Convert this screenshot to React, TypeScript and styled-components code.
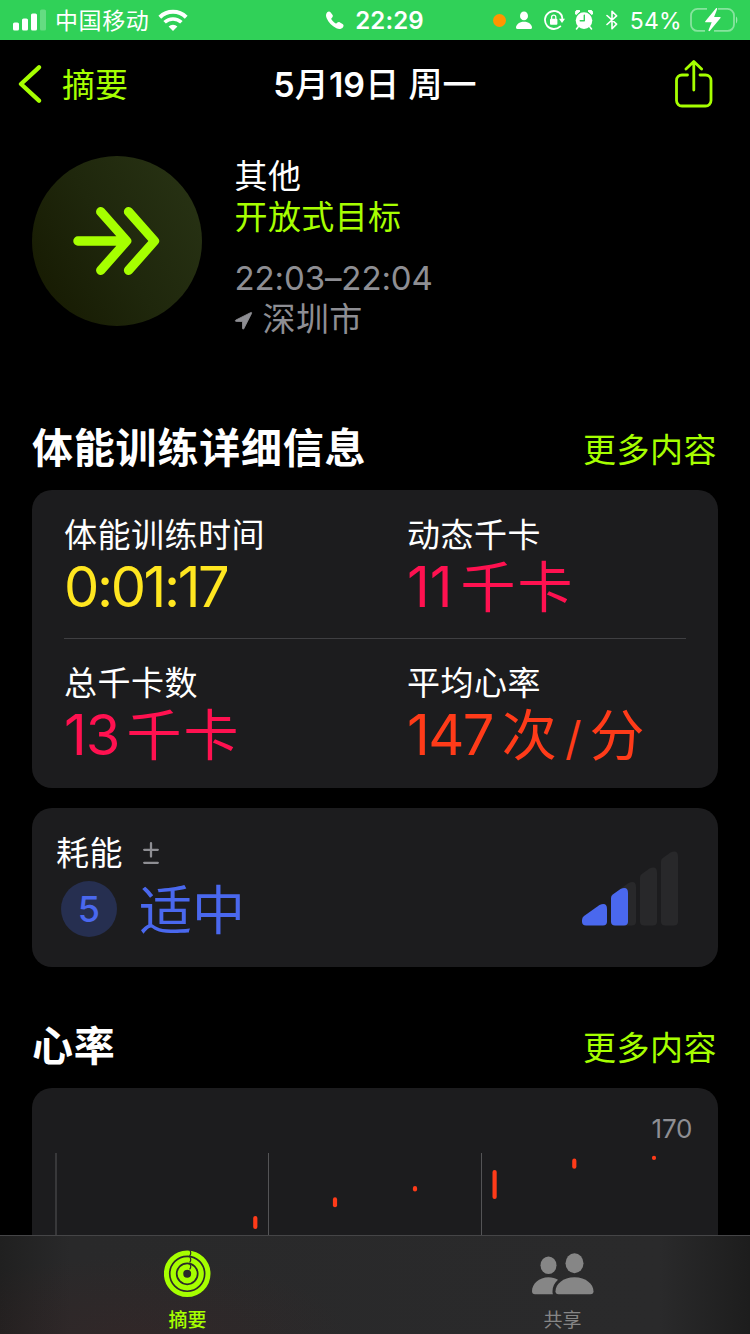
import React from "react";
import styled, { createGlobalStyle } from "styled-components";

const LIME = "#a6ff00";
const GRAY = "#8e8e93";
const RED = "#ff3b19";
const PINK = "#ff1150";
const YELLOW = "#ffe620";
const BLUE = "#4a68ee";

const Global = createGlobalStyle`
  * { box-sizing: border-box; }
  body { margin: 0; background: #000; }
  svg { display: block; flex: none; }
`;

const Screen = styled.div`
  width: 750px;
  height: 1334px;
  display: flex;
  flex-direction: column;
  overflow: hidden;
  background: #000;
  color: #fff;
  font-family: Inter, "Noto Sans CJK SC", sans-serif;
  white-space: nowrap;
`;

const StatusBar = styled.div`
  flex: none;
  height: 40px;
  padding: 0 12px;
  display: grid;
  grid-template-columns: 1fr auto 1fr;
  align-items: center;
  background: #30d158;
`;

const StatusGroup = styled.div<{ $end?: boolean }>`
  display: flex;
  align-items: center;
  justify-content: ${(p) => (p.$end ? "flex-end" : "flex-start")};
`;

const StatusText = styled.span<{ $size: number; $weight?: number; $ls?: number }>`
  padding-top: 2px;
  font-size: ${(p) => p.$size}px;
  font-weight: ${(p) => p.$weight ?? 400};
  letter-spacing: ${(p) => p.$ls ?? 0}px;
  line-height: 38px;
`;

const NavBar = styled.div`
  flex: none;
  height: 88px;
  padding: 0 18px;
  display: grid;
  grid-template-columns: 1fr auto 1fr;
  align-items: center;
`;

const BackButton = styled.div`
  display: flex;
  align-items: center;
  gap: 19px;
  color: ${LIME};
  font-size: 33px;
  line-height: 40px;
`;

const BackText = styled.span`
  padding-top: 2px;
`;

const NavTitle = styled.div`
  padding-top: 2px;
  font-size: 34px;
  font-weight: 500;
  line-height: 40px;
  letter-spacing: 0.1px;
`;

const Numeral = styled.span`
  font-weight: 600;
`;

const ShareButton = styled.div`
  justify-self: end;
  margin-right: 18px;
`;

const Content = styled.div`
  flex: 1;
  min-height: 0;
  overflow: hidden;
  padding: 28px 32px 0;
`;

const Workout = styled.div`
  height: 184px;
  display: flex;
  align-items: flex-start;
  gap: 32.5px;
`;

const WorkoutBadge = styled.div`
  flex: none;
  width: 170px;
  height: 170px;
  border-radius: 50%;
  display: flex;
  align-items: center;
  justify-content: center;
  background: linear-gradient(60deg, #151800 0%, #1f270c 48%, #293415 100%);
`;

const WorkoutInfo = styled.div`
  display: flex;
  flex-direction: column;
`;

const InfoLine = styled.div<{ $color?: string; $gap?: number; $ls?: number }>`
  display: flex;
  align-items: center;
  margin-top: ${(p) => p.$gap ?? 0}px;
  font-size: 33px;
  line-height: 41px;
  letter-spacing: ${(p) => p.$ls ?? 0.4}px;
  color: ${(p) => p.$color ?? "#fff"};
`;

const SectionHead = styled.div<{ $top: number }>`
  height: 50px;
  margin-top: ${(p) => p.$top}px;
  margin-bottom: 18px;
  display: flex;
  justify-content: space-between;
`;

const SectionTitle = styled.h2`
  margin: 0;
  padding-top: 1px;
  font-size: 41px;
  font-weight: 700;
  line-height: 50px;
  letter-spacing: 0.8px;
`;

const MoreLink = styled.a`
  padding: 3px 1px 0 0;
  font-size: 33px;
  line-height: 50px;
  letter-spacing: 0.5px;
  color: ${LIME};
`;

const Card = styled.div<{ $height: number }>`
  height: ${(p) => p.$height}px;
  border-radius: 20px;
  background: #1c1c1e;
`;

const MetricsCard = styled(Card)`
  padding: 0 32px;
  margin-bottom: 20px;
`;

const MetricRow = styled.div`
  height: 148px;
  padding-top: 25px;
  display: grid;
  grid-template-columns: 343px 1fr;

  & + & {
    padding-top: 24px;
    border-top: 1px solid #3f3f42;
  }
`;

const Label = styled.div`
  font-size: 33px;
  line-height: 40px;
  letter-spacing: 0.5px;
`;

const Value = styled.div<{ $color: string; $ls?: number }>`
  display: flex;
  align-items: center;
  height: 64px;
  font-size: 56px;
  line-height: 64px;
  letter-spacing: ${(p) => p.$ls ?? 0}px;
  color: ${(p) => p.$color};
`;

const Unit = styled.span<{ $gap?: number; $ls?: number }>`
  margin-left: ${(p) => p.$gap ?? 0}px;
  font-size: 55px;
  letter-spacing: ${(p) => p.$ls ?? 2}px;
`;

const Slash = styled.span`
  margin: 0 6px 0 6px;
  font-size: 46px;
  line-height: 1;
`;

const EffortCard = styled(Card)`
  padding: 25px 39px 0 24px;
  display: flex;
  justify-content: space-between;
`;

const EffortLabel = styled.div`
  display: flex;
  align-items: center;
  gap: 20px;
`;

const EffortValue = styled.div`
  display: flex;
  align-items: center;
  gap: 22px;
  padding-left: 5px;
  margin-top: 8px;
  height: 56px;
  color: ${BLUE};
`;

const EffortLevel = styled.div`
  width: 56px;
  height: 56px;
  border-radius: 50%;
  text-align: center;
  font-size: 36px;
  font-weight: 500;
  line-height: 57px;
  background: #262f50;
`;

const EffortText = styled.div`
  padding-top: 4px;
  font-size: 53px;
  line-height: 56px;
`;

const EffortBars = styled.div`
  padding-top: 18px;
`;

const ChartCard = styled(Card)`
  display: flex;
  flex-direction: column;
`;

const AxisMax = styled.div`
  height: 64px;
  padding: 25px 26px 0 0;
  text-align: right;
  font-size: 26px;
  line-height: 32px;
  letter-spacing: -0.3px;
  color: ${GRAY};
`;

const TabBar = styled.div`
  flex: none;
  height: 99px;
  display: grid;
  grid-template-columns: 1fr 1fr;
  border-top: 1px solid #454547;
  background:
    radial-gradient(ellipse 220px 80px at 130px 100px, rgba(70, 35, 35, 0.28), transparent),
    linear-gradient(90deg, #202020 0, #29292a 70px, #2a2a2b 660px, #1d1d1d 750px);
`;

const Tab = styled.div<{ $color: string; $weight?: number }>`
  display: flex;
  flex-direction: column;
  align-items: center;
  padding-top: 14px;
  gap: 9px;
  color: ${(p) => p.$color};
  font-size: 19px;
  font-weight: ${(p) => p.$weight ?? 400};
  line-height: 27px;
`;

const TabIcon = styled.div`
  height: 48px;
`;

const Spacer = styled.span<{ $w: number }>`
  flex: none;
  width: ${(p) => p.$w}px;
`;

const SignalIcon = () => (
  <svg width="33" height="22" viewBox="0 0 33 22" fill="#fff">
    <rect x="0" y="13.5" width="6" height="8" rx="1.6" />
    <rect x="9" y="9.5" width="6" height="12" rx="1.6" />
    <rect x="18" y="4.5" width="6" height="17" rx="1.6" />
    <rect x="27" y="0.5" width="6" height="21" rx="1.6" opacity="0.25" />
  </svg>
);

const WifiIcon = () => (
  <svg width="30" height="22" viewBox="0 0 30 22" fill="none" stroke="#fff" strokeWidth="4">
    <path d="M1.8 8.2a19 19 0 0 1 26.4 0" />
    <path d="M6.6 13.3a12.2 12.2 0 0 1 16.8 0" strokeWidth="3.6" />
    <path d="M10.6 17.6a6.4 6.4 0 0 1 8.8 0L15 22z" fill="#fff" stroke="none" />
  </svg>
);

const PhoneIcon = () => (
  <svg width="18" height="18" viewBox="0 0 18 18" fill="#fff">
    <path d="M1.2 1.2C2.4.1 3.8.2 4.7 1.4l1.7 2.4c.7 1 .5 1.8-.2 2.6l-.7.8c-.3.4-.3.8 0 1.2.9 1.4 2.4 2.9 3.9 3.9.4.3.8.3 1.2 0l.8-.7c.8-.7 1.6-.8 2.6-.2l2.6 1.6c1.2.8 1.3 2.2.2 3.4-1.6 1.7-3.8 1.9-6.4.8C5.9 15.2 2.4 11.6.7 7.3-.3 4.9-.3 2.8 1.2 1.2z" />
  </svg>
);

const PersonIcon = () => (
  <svg width="16" height="18" viewBox="0 0 16 18" fill="#fff">
    <ellipse cx="8" cy="4.9" rx="4" ry="4.3" />
    <path d="M0 16.8C0 13.5 3.4 10.8 8 10.8s8 2.7 8 6c0 .7-.4 1.2-1.2 1.2H1.2C.4 18 0 17.5 0 16.8z" />
  </svg>
);

const RotationLockIcon = () => (
  <svg width="21" height="20" viewBox="0 0 21 20" fill="none" stroke="#fff">
    <path d="M17.6 5.2A9 9 0 1 0 16.3 16.4" strokeWidth="1.8" strokeLinecap="round" />
    <path d="M15 8.7h6l-3 4.3z" fill="#fff" stroke="none" />
    <path d="M17.4 5.1q.9 1.7 .9 4" strokeWidth="1.8" />
    <rect x="6" y="8.8" width="7.4" height="6" rx="1" fill="#fff" stroke="none" />
    <path d="M7.6 9V7.2a2.1 2.1 0 0 1 4.2 0V9" strokeWidth="1.3" />
  </svg>
);

const AlarmIcon = () => (
  <svg width="18" height="20" viewBox="0 0 18 20">
    <circle cx="9" cy="10.6" r="8.3" fill="#fff" />
    <path d="M1 4.6A2.6 2.6 0 0 1 5 1zM17 4.6A2.6 2.6 0 0 0 13 1z" fill="#fff" stroke="#fff" strokeWidth="1" strokeLinejoin="round" />
    <path d="M3.2 16.8 1.5 18.9M14.8 16.8l1.7 2.1" stroke="#fff" strokeWidth="1.6" strokeLinecap="round" />
    <path d="M9.3 5.2v5.600H5.2" stroke="#30d158" strokeWidth="1.4" strokeLinecap="round" strokeLinejoin="round" fill="none" />
  </svg>
);

const BluetoothIcon = () => (
  <svg width="12" height="20" viewBox="0 0 12 20" fill="none" stroke="#fff" strokeWidth="1.6" strokeLinejoin="round" strokeLinecap="round">
    <path d="M1 5.5l9.600 8.600L6 18.800V1.200l4.600 4.700L1 14.500" />
  </svg>
);

const BatteryIcon = () => (
  <svg width="48" height="24" viewBox="0 0 48 24" fill="none">
    <path d="M17 .9H7.5A6.5 6.5 0 0 0 1 7.4v9A6.5 6.5 0 0 0 7.5 22.9H15M24 22.9h13.5a6.5 6.5 0 0 0 6.5-6.5v-9A6.5 6.5 0 0 0 37.5.9H28" stroke="#fff" strokeOpacity=".42" strokeWidth="1.8" />
    <path d="M46 8.500c1.800.8 1.800 6 0 6.900z" fill="#fff" fillOpacity=".5" />
    <path d="M25.800.4 15.300 13.200c-.4.500-.1 1 .5 1h5.900L18.600 22c-.4 1.100.6 1.700 1.300.8L30.500 10c.4-.5.1-1-.5-1h-5.900l3-7.800c.4-1.100-.6-1.600-1.300-.8z" fill="#fff" />
  </svg>
);

const BackIcon = () => (
  <svg width="25" height="38" viewBox="0 0 25 38" fill="none" stroke={LIME} strokeWidth="4.3" strokeLinecap="round" strokeLinejoin="round">
    <path d="M21 2.3 3 19l18 16.7" />
  </svg>
);

const ShareIcon = () => (
  <svg width="40" height="48" viewBox="0 0 40 48" fill="none" stroke={LIME} strokeWidth="2.8" strokeLinecap="round" strokeLinejoin="round">
    <path d="M13.5 15H8a5.5 5.5 0 0 0-5.5 5.5v20A5.5 5.5 0 0 0 8 46h23.5a5.5 5.5 0 0 0 5.500-5.500v-20a5.500 5.500 0 0 0-5.500-5.500H26" />
    <path d="M19.8 30V1.8M12 9l7.800-7.500L27.600 9" />
  </svg>
);

const OpenGoalIcon = () => (
  <svg width="88" height="68" viewBox="-0.2 0 88 68" fill="none" stroke={LIME} strokeWidth="9.3" strokeLinecap="round" strokeLinejoin="round">
    <path d="M4.7 34H53M27.5 4.7 53.5 34l-26 29.3" />
    <path d="M55.3 4.7 81.3 34l-26 29.3" />
  </svg>
);

const LocationIcon = () => (
  <svg width="18" height="18" viewBox="0 -1 18 18" overflow="visible" fill={GRAY} stroke={GRAY} strokeWidth="0.8" strokeLinejoin="round">
    <path d="M15.8.5.9 8c-.9.5-.7 1.4.3 1.4l6.3.1v6.8c0 1 1 1.200 1.400.3l7.700-15.200C17 .7 16.500.2 15.800.5z" />
  </svg>
);

const PlusMinusIcon = () => (
  <svg width="16" height="23" viewBox="0 0 16 23" stroke={GRAY} strokeWidth="2.3" strokeLinecap="round">
    <path d="M1.2 7.8h13.6M8 1.2v13.3M1.2 20.8h13.6" />
  </svg>
);

const BarsIcon = () => (
  <svg width="97" height="75" viewBox="0 0 97 75">
    <g fill="#28282a">
      <path d="M29 47q0-2.2 1.8-3.6L46.5 32q7.5-3 7.5 4V70.500a4 4 0 0 1-4 4H33a4 4 0 0 1-4-4z" />
      <path d="M58 26.500q0-2.200 1.800-3.600L67.500 17.500q7.500-3 7.500 4V70.500a4 4 0 0 1-4 4h-9a4 4 0 0 1-4-4z" />
      <path d="M79 10.500q0-2.200 1.800-3.600L88.500 1.500Q96 -1.500 96 5.500V70.500a4 4 0 0 1-4 4h-9a4 4 0 0 1-4-4z" />
    </g>
    <g fill={BLUE}>
      <path d="M0 69q0-2.500 2-4l15.500-11q7.500-3 7.500 4V70.500a4 4 0 0 1-4 4H4a4 4 0 0 1-4-4z" />
      <path d="M29 47q0-2.200 1.800-3.600L38.500 38q7.500-3 7.500 4V70.500a4 4 0 0 1-4 4h-9a4 4 0 0 1-4-4z" />
    </g>
  </svg>
);

const RingsIcon = () => (
  <svg width="48" height="48" viewBox="0.8 0.2 48 48" fill="none" stroke={LIME}>
    <circle cx="24" cy="24" r="20.8" strokeWidth="5" />
    <circle cx="24" cy="24" r="14" strokeWidth="5.3" />
    <circle cx="24" cy="24" r="6.8" strokeWidth="5.7" />
    <path d="M26.6 0.5q2 2.7 -.2 5.7M26.6 7.3q2 2.7 -.2 5.4M26.6 14.3q2 2.7 -.2 5.2" stroke="#2a2a2a" strokeWidth="1.2" />
  </svg>
);

const PeopleIcon = () => (
  <svg width="64" height="48" viewBox="0 0 64 48" fill="#868686">
    <ellipse cx="17.5" cy="15.2" rx="8" ry="8.8" />
    <ellipse cx="43.5" cy="13.2" rx="9" ry="10" />
    <path d="M22 44.3H4q-3 0-3-3C1 33.8 8 27.3 17.5 27.3c3.7 0 7 .9 9.5 2.5-3.5 3-5.5 7-5.5 11.5 0 1.2 0 2 .5 3z" />
    <path d="M24.5 41.3c0-7 7.5-14 19-14s19 7 19 14q0 3-3 3h-32q-3 0-3-3z" />
  </svg>
);

const GRID_LINES = [
  { x: 55, w: 2, color: "#38383a" },
  { x: 268, w: 1, color: "#545456" },
  { x: 481, w: 1, color: "#545456" },
];

const BEATS = [
  { x: 255.3, from: 1216, to: 1229 },
  { x: 335, from: 1197.3, to: 1207.3 },
  { x: 415, from: 1186, to: 1191.6 },
  { x: 494.6, from: 1170, to: 1199 },
  { x: 574.3, from: 1158.6, to: 1168.8 },
  { x: 654, from: 1155.8, to: 1160 },
];

const HeartChart = () => (
  <svg width="686" height="84" viewBox="32 1152 686 84">
    {GRID_LINES.map((l) => (
      <rect key={l.x} x={l.x} y={1153} width={l.w} height={84} fill={l.color} />
    ))}
    {BEATS.map((b) => (
      <rect key={b.x} x={b.x - 2.1} y={b.from} width={4.2} height={b.to - b.from} rx={2.1} fill={RED} />
    ))}
  </svg>
);

const Dot = styled.span`
  width: 13px;
  height: 13px;
  border-radius: 50%;
  background: #ff9500;
`;

export default function App() {
  return (
    <Screen>
      <Global />
      <StatusBar>
        <StatusGroup>
          <Spacer $w={1} />
          <SignalIcon />
          <Spacer $w={9} />
          <StatusText $size={23} $ls={0.6}>中国移动</StatusText>
          <Spacer $w={9} />
          <WifiIcon />
        </StatusGroup>
        <StatusGroup>
          <PhoneIcon />
          <Spacer $w={11} />
          <StatusText $size={24} $weight={600} $ls={0.1}>22:29</StatusText>
        </StatusGroup>
        <StatusGroup $end>
          <Dot />
          <Spacer $w={10} />
          <PersonIcon />
          <Spacer $w={12} />
          <RotationLockIcon />
          <Spacer $w={10} />
          <AlarmIcon />
          <Spacer $w={13} />
          <BluetoothIcon />
          <Spacer $w={12} />
          <StatusText $size={23} $ls={0.3}>54%</StatusText>
          <Spacer $w={8} />
          <BatteryIcon />
        </StatusGroup>
      </StatusBar>

      <NavBar>
        <BackButton>
          <BackIcon />
          <BackText>摘要</BackText>
        </BackButton>
        <NavTitle>
          <Numeral>5</Numeral>月<Numeral>19</Numeral>日 周一
        </NavTitle>
        <ShareButton>
          <ShareIcon />
        </ShareButton>
      </NavBar>

      <Content>
        <Workout>
          <WorkoutBadge>
            <OpenGoalIcon />
          </WorkoutBadge>
          <WorkoutInfo>
            <InfoLine>其他</InfoLine>
            <InfoLine $color={LIME}>开放式目标</InfoLine>
            <InfoLine $color={GRAY} $gap={20} $ls={-0.1}>22:03–22:04</InfoLine>
            <InfoLine $color={GRAY}>
              <LocationIcon />
              <Spacer $w={10} />
              深圳市
            </InfoLine>
          </WorkoutInfo>
        </Workout>

        <SectionHead $top={82}>
          <SectionTitle>体能训练详细信息</SectionTitle>
          <MoreLink>更多内容</MoreLink>
        </SectionHead>
        <MetricsCard $height={298}>
          <MetricRow>
            <div>
              <Label>体能训练时间</Label>
              <Value $color={YELLOW} $ls={-2.4}>0:01:17</Value>
            </div>
            <div>
              <Label>动态千卡</Label>
              <Value $color={PINK}>11<Unit $gap={8}>千卡</Unit></Value>
            </div>
          </MetricRow>
          <MetricRow>
            <div>
              <Label>总千卡数</Label>
              <Value $color={PINK} $ls={-1}>13<Unit $gap={7}>千卡</Unit></Value>
            </div>
            <div>
              <Label>平均心率</Label>
              <Value $color={RED} $ls={-1.6}>
                147
                <Unit $gap={9}>
                  次<Slash>/</Slash>分
                </Unit>
              </Value>
            </div>
          </MetricRow>
        </MetricsCard>

        <EffortCard $height={159}>
          <div>
            <EffortLabel>
              <Label>耗能</Label>
              <PlusMinusIcon />
            </EffortLabel>
            <EffortValue>
              <EffortLevel>5</EffortLevel>
              <EffortText>适中</EffortText>
            </EffortValue>
          </div>
          <EffortBars>
            <BarsIcon />
          </EffortBars>
        </EffortCard>

        <SectionHead $top={53}>
          <SectionTitle>心率</SectionTitle>
          <MoreLink>更多内容</MoreLink>
        </SectionHead>
        <ChartCard $height={300}>
          <AxisMax>170</AxisMax>
          <HeartChart />
        </ChartCard>
      </Content>

      <TabBar>
        <Tab $color={LIME} $weight={500}>
          <TabIcon>
            <RingsIcon />
          </TabIcon>
          摘要
        </Tab>
        <Tab $color="#868686">
          <TabIcon>
            <PeopleIcon />
          </TabIcon>
          共享
        </Tab>
      </TabBar>
    </Screen>
  );
}
